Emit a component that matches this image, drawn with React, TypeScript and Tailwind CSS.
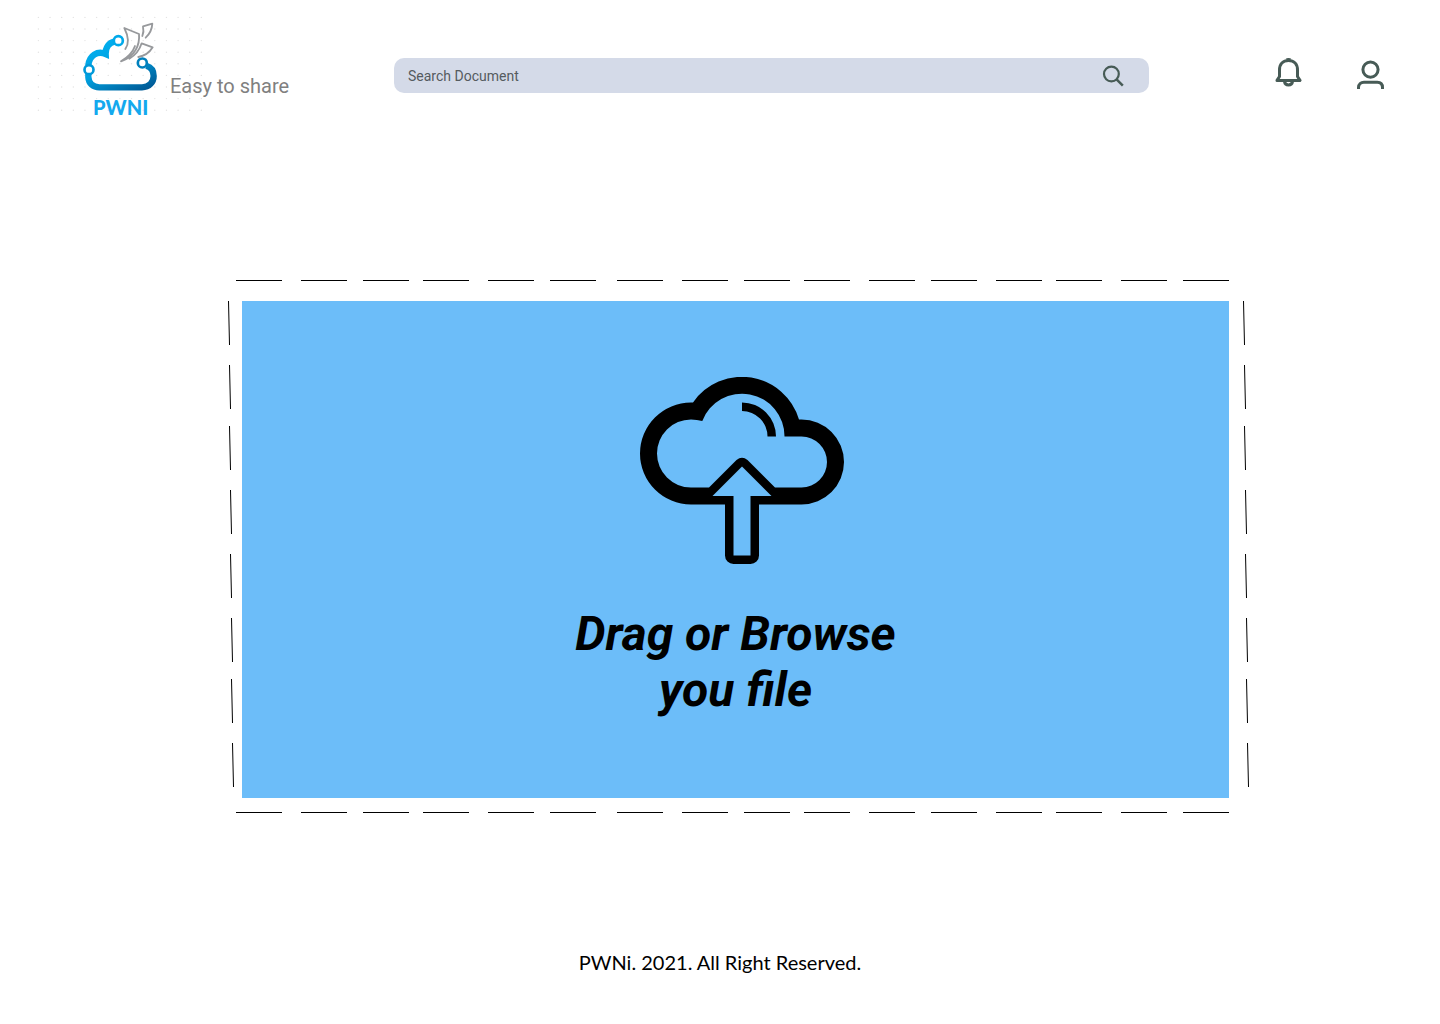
import React from "react";

const topDashes = [0, 65, 127, 187, 252, 314, 381, 446, 508, 568, 633, 695, 760, 820, 885, 947];
const sideDashes = [
  { x: 0, y: 0 },
  { x: 1, y: 64 },
  { x: 1, y: 125 },
  { x: 2, y: 189 },
  { x: 2, y: 253 },
  { x: 3, y: 317 },
  { x: 3, y: 378 },
  { x: 4, y: 442 },
];

function HorizontalDashes() {
  return (
    <svg className="block h-px w-full" viewBox="0 0 993 1" preserveAspectRatio="none" aria-hidden="true">
      {topDashes.map((x) => (
        <rect key={x} x={x} y="0" width="46" height="1" fill="#000" />
      ))}
    </svg>
  );
}

function VerticalDashes() {
  return (
    <svg className="block h-[497px] w-1.5 shrink-0" viewBox="0 0 6 497" aria-hidden="true">
      {sideDashes.map(({ x, y }) => (
        <line key={y} x1={x + 0.5} y1={y} x2={x + 1.5} y2={y + 44} stroke="#000" strokeWidth="1" />
      ))}
    </svg>
  );
}

function Logo() {
  return (
    <svg className="block h-[121px] w-[134px] shrink-0 overflow-visible" viewBox="0 0 134 121" role="img" aria-label="PWNI">
      <defs>
        <linearGradient id="cloud" gradientUnits="userSpaceOnUse" x1="250" y1="120" x2="330" y2="290">
          <stop offset="0" stopColor="#00aeef" />
          <stop offset="0.45" stopColor="#00a0df" />
          <stop offset="1" stopColor="#005b97" />
        </linearGradient>
      </defs>
      {Array.from({ length: 9 }, (_, row) =>
        Array.from({ length: 15 }, (_, col) => (
          <circle key={`${row}-${col}`} cx={2.4 + col * 11.64} cy={2.4 + row * 11.6} r="0.7" fill="#e3e3e3" />
        ))
      )}
      <g transform="translate(-16 -15) scale(0.33333)" fill="none">
        <g stroke="url(#cloud)" strokeWidth="19">
          <path d="M283 125C268 128 256 142 257 162C232 151 208 167 205 196" />
          <path d="M205 220V231C206 251 220 262 238 262H366C388 262 401 246 401 228C401 212 392 201 379 197" />
        </g>
        <g fill="#fff" strokeWidth="8">
          <circle cx="295" cy="122" r="13.5" stroke="#00a9ea" />
          <circle cx="207" cy="209" r="13.5" stroke="#0099d9" />
          <circle cx="367" cy="189" r="13.5" stroke="#0080bd" />
        </g>
        <g stroke="#97999c" strokeWidth="5.500" strokeLinejoin="round" strokeLinecap="round">
          <path d="M316 147C329 129 324 106 313 84L357 102C360 135 345 170 303 184C326 170 338 158 345 138" />
          <path d="M367 108C371 98 371 88 369 79L397 71C396 89 388 103 377 113" />
          <path d="M328 176C346 166 358 152 365 130L398 142C389 157 374 168 355 171" />
        </g>
      </g>
      <text x="57" y="100" fill="#14a9ee" className="font-['Lato'] text-[20px] font-black">
        PWNI
      </text>
    </svg>
  );
}

function SearchIcon() {
  return (
    <svg className="block size-[22px]" viewBox="0 0 22 22" fill="none" stroke="#475b56" strokeWidth="2.2" aria-hidden="true">
      <circle cx="9.4" cy="9" r="7.4" />
      <path d="M14.600 14.400L20.800 20.600" strokeWidth="2.500" />
    </svg>
  );
}

function BellIcon() {
  return (
    <svg className="block h-[37px] w-[27px]" viewBox="0 0 27 37" fill="none" stroke="#475b56" strokeWidth="3" aria-hidden="true">
      <path d="M4.500 19.500V13C4.500 7 8 3.500 13.500 3.500S22.500 7 22.500 13V19.500L25 23.400H2Z" strokeLinejoin="round" />
      <path d="M9.500 24.500C10 29 17 29 17.500 24.500" />
      <path d="M11.500 2.500C12 1.700 15 1.700 15.500 2.500" strokeWidth="2" />
    </svg>
  );
}

function UserIcon() {
  return (
    <svg className="block h-[37px] w-7" viewBox="0 0 28 37" fill="none" stroke="#475b56" strokeWidth="3" aria-hidden="true">
      <circle cx="13.500" cy="12.600" r="7.600" />
      <path d="M1.500 32V30.500C1.500 27 4 25.200 7 25.200H20.300C23.500 25.200 25.500 27.200 25.500 30.500V32" />
    </svg>
  );
}

function UploadIcon() {
  return (
    <svg className="block h-[187px] w-[217px]" viewBox="0 0 217 187" fill="#000" fillRule="evenodd" aria-hidden="true">
      <path d="M64 127.500A51 51 0 0 1 64 25.500H66A59.500 59.500 0 0 1 172 42.500H174.500A42.500 42.500 0 0 1 174.500 127.500H132V178.500A8.500 8.500 0 0 1 123.500 187H106.500A8.500 8.500 0 0 1 98 178.500V127.500ZM75.300 44A42.500 42.500 0 0 1 157.500 59.500H174.500A25.500 25.500 0 0 1 174.500 110.500H148L120.500 83Q115 78.500 109.500 83L82 110.500H64A34 34 0 0 1 64 42.500Q70 42.500 75.300 44ZM115 89.500L144.500 119H123.500V178.500H106.500V119H85.500Z" />
      <path d="M115 25.500A34 34 0 0 1 149 59.500H140.500A25.500 25.500 0 0 0 115 34Z" />
    </svg>
  );
}

export default function App() {
  return (
    <div className="min-h-screen bg-white font-['Roboto',sans-serif]">
      <header className="flex items-center py-[15px]">
        <div className="flex w-[394px] shrink-0 items-center pl-9">
          <Logo />
          <p className="relative pt-[21px] text-xl leading-7 text-[#808080]">Easy to share</p>
        </div>
        <form className="flex h-[35px] flex-1 items-center rounded-[10px] bg-[#d4dae8] pr-[25px] pl-3.5" role="search">
          <input
            type="search"
            aria-label="Search Document"
            placeholder="Search Document"
            className="min-w-0 flex-1 bg-transparent text-sm text-[#555b5f] outline-none placeholder:text-[#555b5f]"
          />
          <button type="button" aria-label="Search">
            <SearchIcon />
          </button>
        </form>
        <nav className="flex w-[291px] shrink-0 gap-[55px] pl-[126px]">
          <button type="button" aria-label="Notifications">
            <BellIcon />
          </button>
          <button type="button" aria-label="Account">
            <UserIcon />
          </button>
        </nav>
      </header>

      <main className="mt-[129px] mr-[191px] ml-[228px]">
        <div className="pr-5 pl-2">
          <HorizontalDashes />
        </div>
        <div className="mt-5 mb-3.5 flex">
          <VerticalDashes />
          <label className="ml-2 flex h-[497px] flex-1 cursor-pointer flex-col items-center bg-[#6cbdf9] pt-[76px]">
            <input type="file" className="sr-only" />
            <UploadIcon />
            <span className="mt-[42px] text-center text-5xl leading-[56px] font-bold text-black italic">
              Drag or Browse
              <br />
              you file
            </span>
          </label>
          <div className="ml-3.5">
            <VerticalDashes />
          </div>
        </div>
        <div className="pr-5 pl-2">
          <HorizontalDashes />
        </div>
      </main>

      <footer className="mt-[135px] text-center font-['Lato',sans-serif] text-xl leading-7 text-black">
        PWNi. 2021. All Right Reserved.
      </footer>
    </div>
  );
}
